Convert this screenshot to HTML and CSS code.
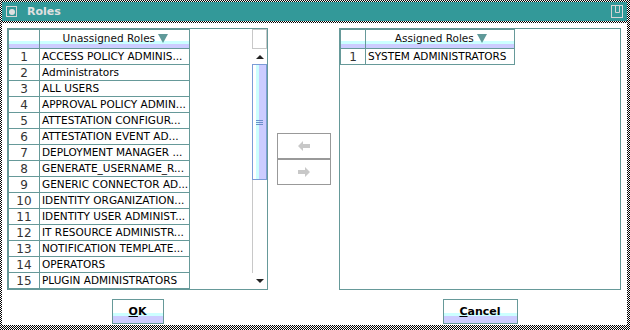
FILE: index.html
```html
<!DOCTYPE html>
<html lang="en">
<head>
    <meta charset="UTF-8">
    <title>Roles</title>
    <link rel="stylesheet" href="styles.css">
</head>
<body>
<div class="window">
    <div class="titlebar">
        <span class="title-icon"><span class="dot"></span></span>
        <span class="title">Roles</span>
        <svg class="max-icon" width="12" height="13" viewBox="0 0 12 13">
            <rect x="0.5" y="0.5" width="11" height="12" fill="none" stroke="#d4d4d4"/>
            <path d="M4.5 1 V7.5 H8.5 V1" fill="none" stroke="#d4d4d4"/>
        </svg>
    </div>
    <div class="content">
        <div class="panes">
            <div class="pane">
                <div class="grid left-grid">
                    <div class="row head">
                        <div class="num"></div>
                        <div class="name">Unassigned Roles <svg class="sort" width="10" height="9" viewBox="0 0 10 9"><path d="M0 0 H10 L5 9 Z" fill="#5f9999"/></svg></div>
                    </div>
                    <div class="row"><div class="num">1</div><div class="name">ACCESS POLICY ADMINIS...</div></div>
                    <div class="row"><div class="num">2</div><div class="name">Administrators</div></div>
                    <div class="row"><div class="num">3</div><div class="name">ALL USERS</div></div>
                    <div class="row"><div class="num">4</div><div class="name">APPROVAL POLICY ADMIN...</div></div>
                    <div class="row"><div class="num">5</div><div class="name">ATTESTATION CONFIGUR...</div></div>
                    <div class="row"><div class="num">6</div><div class="name">ATTESTATION EVENT AD...</div></div>
                    <div class="row"><div class="num">7</div><div class="name">DEPLOYMENT MANAGER ...</div></div>
                    <div class="row"><div class="num">8</div><div class="name">GENERATE_USERNAME_R...</div></div>
                    <div class="row"><div class="num">9</div><div class="name">GENERIC CONNECTOR AD...</div></div>
                    <div class="row"><div class="num">10</div><div class="name">IDENTITY ORGANIZATION...</div></div>
                    <div class="row"><div class="num">11</div><div class="name">IDENTITY USER ADMINIST...</div></div>
                    <div class="row"><div class="num">12</div><div class="name">IT RESOURCE ADMINISTR...</div></div>
                    <div class="row"><div class="num">13</div><div class="name">NOTIFICATION TEMPLATE...</div></div>
                    <div class="row"><div class="num">14</div><div class="name">OPERATORS</div></div>
                    <div class="row"><div class="num">15</div><div class="name">PLUGIN ADMINISTRATORS</div></div>
                </div>
                <div class="vscroll">
                    <div class="corner"></div>
                    <div class="sbtn"><span class="arrow-up"></span></div>
                    <div class="thumb"><span class="grip"></span></div>
                    <div class="track"></div>
                    <div class="sbtn"><span class="arrow-down"></span></div>
                </div>
            </div>
            <div class="movers">
                <button class="move" disabled>
                    <svg width="12" height="10" viewBox="0 0 12 10"><path d="M0 5 L5 0 V3 H12 V7 H5 V10 Z" fill="#c8c8c8"/></svg>
                </button>
                <button class="move" disabled>
                    <svg width="12" height="10" viewBox="0 0 12 10"><path d="M12 5 L7 0 V3 H0 V7 H7 V10 Z" fill="#c8c8c8"/></svg>
                </button>
            </div>
            <div class="pane">
                <div class="grid right-grid">
                    <div class="row head">
                        <div class="num"></div>
                        <div class="name">Assigned Roles <svg class="sort" width="10" height="9" viewBox="0 0 10 9"><path d="M0 0 H10 L5 9 Z" fill="#5f9999"/></svg></div>
                    </div>
                    <div class="row"><div class="num">1</div><div class="name">SYSTEM ADMINISTRATORS</div></div>
                </div>
            </div>
        </div>
        <div class="actions">
            <div class="cell"><button class="action ok"><u>O</u>K</button></div>
            <div></div>
            <div class="cell"><button class="action cancel"><u>C</u>ancel</button></div>
        </div>
    </div>
</div>
</body>
</html>
```

FILE: styles.css
```css
body {
    margin: 0;
    background: #fff;
    font-family: "DejaVu Sans", Verdana, sans-serif;
}
.window {
    width: 630px;
    height: 330px;
    box-sizing: border-box;
    padding: 2px 3px 5px 2px;
    background-color: #fff;
    background-image: repeating-conic-gradient(#000 0% 25%, #fff 0% 50%);
    background-size: 2px 2px;
    display: flex;
    flex-direction: column;
}
.titlebar {
    height: 19px;
    background: #339999;
    display: flex;
    align-items: center;
    padding: 0 4px 0 4px;
    margin-bottom: 2px;
}
.title-icon {
    width: 11px;
    height: 11px;
    box-sizing: border-box;
    border: 1px solid #d4d4d4;
    display: flex;
    align-items: center;
    justify-content: center;
}
.title-icon .dot {
    width: 6px;
    height: 6px;
    border-radius: 50%;
    background: #e0e0e0;
}
.title {
    margin-left: 10px;
    color: #e0e0e0;
    font-weight: bold;
    font-size: 11px;
}
.max-icon {
    margin-left: auto;
}
.content {
    flex: 1;
    background: #fff;
    padding: 5px 6px 0 5px;
}
.panes {
    display: grid;
    grid-template-columns: 261px 71px 282px;
    height: 262px;
}
.pane {
    border: 1px solid #669999;
    display: flex;
    overflow: hidden;
}
.grid {
    border-top: 1px solid #669999;
    border-left: 1px solid #669999;
    align-self: flex-start;
}
.left-grid {
    margin-right: auto;
}
.row {
    display: grid;
    grid-template-columns: 31px 150px;
    height: 16px;
}
.right-grid .row {
    grid-template-columns: 25px 149px;
}
.row > div {
    border-right: 1px solid #669999;
    border-bottom: 1px solid #669999;
    overflow: hidden;
    white-space: nowrap;
}
.row.head {
    height: 19px;
}
.row.head > div {
    background: linear-gradient(#fff 0 11px, #ccffff 11px 14px, #ccccff 14px);
}
.num {
    text-align: center;
    font-size: 12px;
    line-height: 17px;
    color: #333;
}
.name {
    font-size: 10.5px;
    line-height: 15px;
    padding-left: 2px;
    color: #000;
}
.head .name {
    text-align: center;
    line-height: 16px;
    color: #111;
}
.sort {
    vertical-align: -1px;
}
.vscroll {
    width: 15px;
    display: flex;
    flex-direction: column;
}
.corner {
    height: 20px;
    box-sizing: border-box;
    border: 1px solid #c8c8c8;
}
.sbtn {
    height: 15px;
    display: flex;
    align-items: center;
    justify-content: center;
    background: #fff;
}
.sbtn:last-child {
    height: 16px;
}
.arrow-up {
    border-left: 4px solid transparent;
    border-right: 4px solid transparent;
    border-bottom: 4px solid #222;
}
.arrow-down {
    border-left: 4px solid transparent;
    border-right: 4px solid transparent;
    border-top: 4px solid #222;
}
.thumb {
    height: 116px;
    box-sizing: border-box;
    border: 1px solid #7b9cd6;
    background: linear-gradient(to right, #fff 0 3px, #ccffff 3px 6px, #ccccff 6px);
    display: flex;
    align-items: center;
    justify-content: center;
}
.grip {
    width: 7px;
    height: 5px;
    background: repeating-linear-gradient(#6b8fc9 0 1px, transparent 1px 2px);
}
.track {
    flex: 1;
    border-left: 1px solid #c8c8c8;
    background: #fff;
}
.movers {
    display: flex;
    flex-direction: column;
    justify-content: center;
    align-items: flex-start;
    padding-left: 9px;
}
.move {
    width: 54px;
    height: 26px;
    box-sizing: border-box;
    border: 1px solid #999;
    background: #fff;
    padding: 0;
    margin: 0;
    display: flex;
    align-items: center;
    justify-content: center;
}
.actions {
    display: grid;
    grid-template-columns: 261px 71px 282px;
    margin-top: 9px;
}
.cell {
    display: flex;
    justify-content: center;
}
.action {
    height: 25px;
    box-sizing: border-box;
    border: 1px solid #669999;
    background: linear-gradient(#fff 0 13px, #ccffff 13px 16px, #ccccff 16px);
    font-family: "DejaVu Sans", Verdana, sans-serif;
    font-weight: bold;
    font-size: 11px;
    color: #000;
    padding: 0;
}
.ok {
    width: 52px;
}
.cancel {
    width: 75px;
}
```
